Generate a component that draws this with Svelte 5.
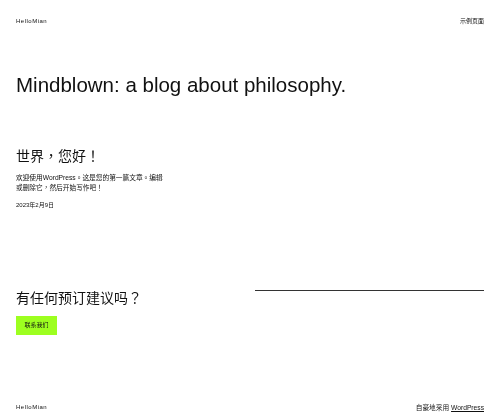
<script lang="ts">
	const siteName = 'HelloMian';
</script>

<div class="page">
	<header class="top">
		<a href="/" class="site">{siteName}</a>
		<a href="/" class="nav">示例页面</a>
	</header>

	<h1>Mindblown: a blog about philosophy.</h1>

	<article class="post">
		<h2>世界，您好！</h2>
		<p>欢迎使用WordPress。这是您的第一篇文章。编辑或删除它，然后开始写作吧！</p>
		<time>2023年2月9日</time>
	</article>

	<section class="cta">
		<div class="cta-left">
			<h3>有任何预订建议吗？</h3>
			<a href="/" class="button">联系我们</a>
		</div>
		<hr />
	</section>

	<footer class="bottom">
		<span class="site">{siteName}</span>
		<span class="credit">自豪地采用 <a href="/">WordPress</a></span>
	</footer>
</div>

<style>
	:global(body) {
		background: #fff;
	}

	.page {
		height: 417px;
		box-sizing: border-box;
		padding: 18px 16px 0;
		display: flex;
		flex-direction: column;
		overflow: hidden;
		font-family: 'Liberation Sans', 'Noto Sans CJK TC', sans-serif;
		color: #111;
		filter: blur(0.6px);
	}

	a {
		color: inherit;
		text-decoration: none;
	}

	.top,
	.bottom {
		display: flex;
		justify-content: space-between;
		align-items: center;
		font-size: 6px;
		line-height: 7px;
	}

	.site {
		letter-spacing: 0.5px;
	}

	h1 {
		margin: 44px 0 0;
		font-size: 20.5px;
		line-height: 31px;
		font-weight: 400;
	}

	.post {
		margin-top: 46px;
		width: 152px;
	}

	h2 {
		margin: 0;
		font-size: 14px;
		line-height: 20px;
		font-weight: 400;
		white-space: nowrap;
	}

	.post p {
		margin: 7px 0 0;
		font-size: 6.7px;
		line-height: 9.5px;
	}

	time {
		display: block;
		margin-top: 10px;
		font-size: 6px;
		line-height: 7px;
	}

	.cta {
		margin-top: 80px;
		display: flex;
		align-items: flex-start;
		justify-content: space-between;
	}

	h3 {
		margin: 0;
		font-size: 14px;
		line-height: 18px;
		font-weight: 400;
	}

	.button {
		display: block;
		width: 41px;
		height: 19px;
		margin-top: 9px;
		background: #9dff20;
		font-size: 6px;
		line-height: 19px;
		text-align: center;
	}

	hr {
		width: 229px;
		margin: 1px 0 0;
		border: 0;
		border-top: 1px solid #333;
	}

	.bottom {
		margin-top: auto;
		margin-bottom: 6px;
	}

	.credit {
		font-size: 6.7px;
	}

	.credit a {
		text-decoration: underline;
	}
</style>
